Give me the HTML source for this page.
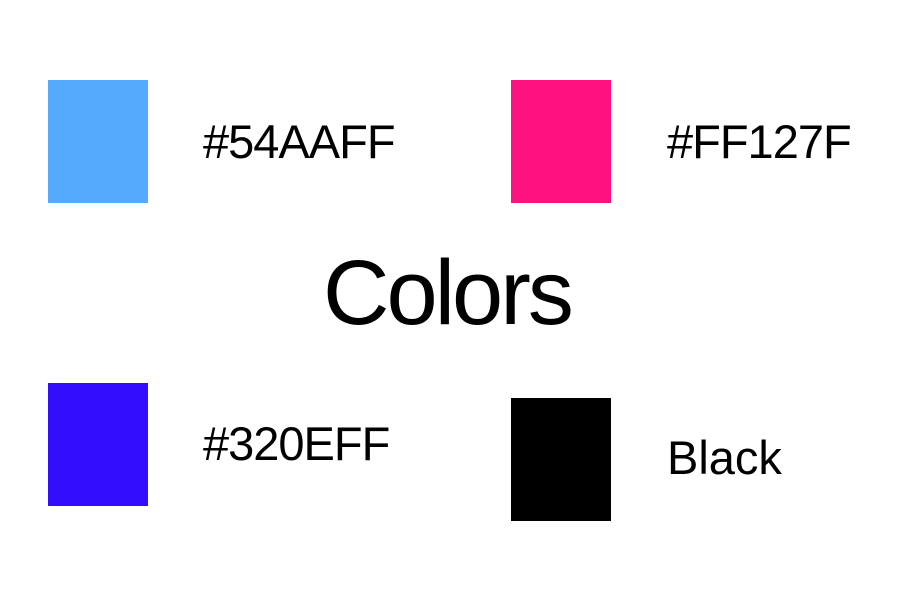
<!DOCTYPE html>
<html><head><meta charset="utf-8"><style>
html,body{margin:0;padding:0;background:#fff;}
body{width:901px;height:601px;position:relative;overflow:hidden;font-family:"Liberation Sans",sans-serif;color:#000;}
.sq{position:absolute;width:100px;height:123px;}
.t{position:absolute;font-size:47px;line-height:47px;letter-spacing:-1px;white-space:nowrap;}
</style></head><body>
<div class="sq" style="left:48px;top:80px;background:#54AAFF"></div>
<div class="sq" style="left:511px;top:80px;background:#FF127F"></div>
<div class="sq" style="left:48px;top:383px;background:#320EFF"></div>
<div class="sq" style="left:511px;top:398px;background:#000"></div>
<div class="t" style="left:203px;top:118px">#54AAFF</div>
<div class="t" style="left:667px;top:118px">#FF127F</div>
<div class="t" style="left:203px;top:420px">#320EFF</div>
<div class="t" style="left:667px;top:434px;letter-spacing:0">Black</div>
<div class="t" style="left:323px;top:247px;font-size:92px;line-height:92px;letter-spacing:-3px">Colors</div>
</body></html>
